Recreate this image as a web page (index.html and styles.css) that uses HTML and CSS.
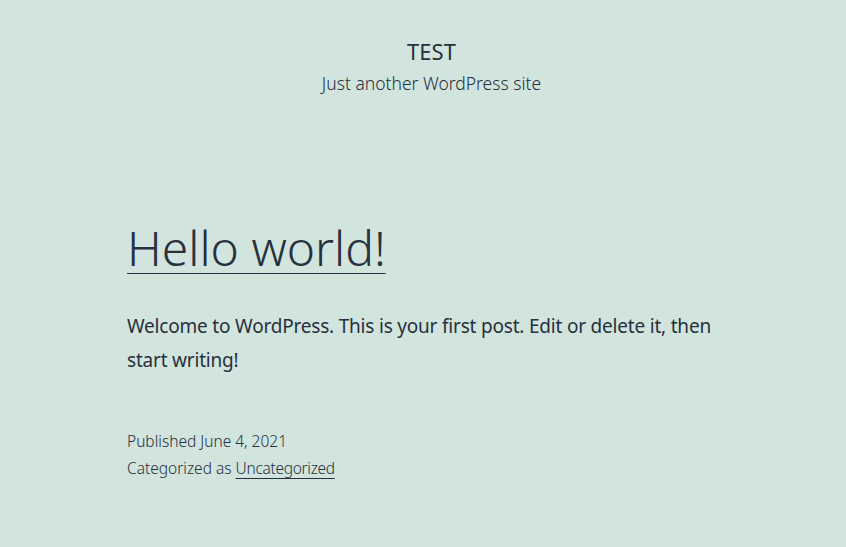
FILE: index.html
```html
<!DOCTYPE html>
<html lang="en">
<head>
<meta charset="utf-8">
<title>TEST</title>
<link rel="stylesheet" href="styles.css">
</head>
<body>
<header class="site-header">
  <p class="site-title">TEST</p>
  <p class="site-description">Just another WordPress site</p>
</header>
<main class="site-main">
  <article class="post">
    <h1 class="entry-title"><a href="#">Hello world!</a></h1>
    <div class="entry-content">
      <p>Welcome to WordPress. This is your first post. Edit or delete it, then start writing!</p>
    </div>
    <footer class="entry-footer">
      <div class="meta">Published June 4, 2021</div>
      <div class="meta">Categorized as <a href="#">Uncategorized</a></div>
    </footer>
  </article>
</main>
</body>
</html>
```
FILE: styles.css
```css
html, body {
  margin: 0;
  padding: 0;
}
body {
  background: #d1e4dd;
  color: #28303d;
  font-family: "Noto Sans", sans-serif;
  height: 547px;
  overflow: hidden;
}
a {
  color: #28303d;
}
.site-header {
  display: flex;
  flex-direction: column;
  align-items: center;
  padding: 36px 0 0 17px;
}
.site-title {
  margin: 0;
  font-size: 22px;
  line-height: 30px;
  font-weight: 400;
}
.site-description {
  margin: 5px 0 0;
  font-size: 17.5px;
  line-height: 24px;
  font-weight: 300;
}
.site-main {
  width: 592px;
  margin: 0 auto;
  padding-top: 122px;
}
.entry-title {
  margin: 0;
  font-size: 48px;
  line-height: 62px;
  font-weight: 300;
}
.entry-title a {
  text-decoration: underline;
  text-decoration-thickness: 1px;
  text-underline-offset: 7px;
}
.entry-content p {
  margin: 30px 0 0;
  font-size: 19px;
  line-height: 34px;
  letter-spacing: -0.2px;
}
.entry-footer {
  margin-top: 51px;
  font-size: 15.5px;
  line-height: 27px;
  font-weight: 300;
}
.entry-footer a {
  letter-spacing: -0.3px;
  text-decoration-thickness: 1px;
  text-underline-offset: 4px;
}
```
